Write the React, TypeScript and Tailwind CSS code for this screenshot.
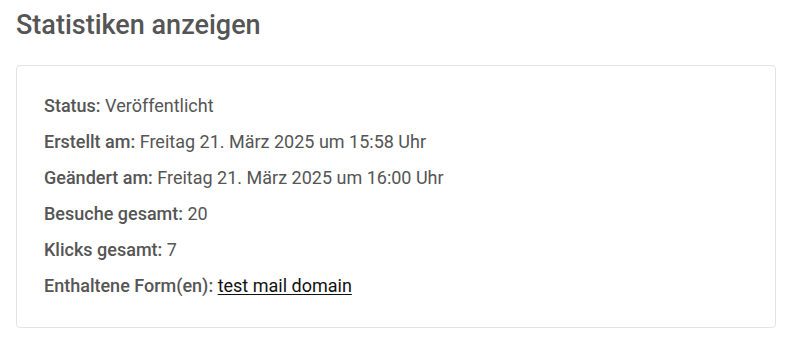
export default function App() {
  const rows: [string, React.ReactNode][] = [
    ["Status:", "Veröffentlicht"],
    ["Erstellt am:", "Freitag 21. März 2025 um 15:58 Uhr"],
    ["Geändert am:", "Freitag 21. März 2025 um 16:00 Uhr"],
    ["Besuche gesamt:", "20"],
    ["Klicks gesamt:", "7"],
    [
      "Enthaltene Form(en):",
      <a href="#" className="text-[#111] underline underline-offset-2">test mail domain</a>,
    ],
  ];
  return (
    <div className="bg-white min-h-[338px] px-4 pt-[9px] text-[#555]" style={{ fontFamily: "Roboto, 'Liberation Sans', sans-serif" }}>
      <h1 className="text-[27px] leading-[32px] font-medium text-[#555] mb-[24px]">Statistiken anzeigen</h1>
      <div className="w-[760px] border border-[#e3e3e3] rounded-[4px] pl-[27px] pt-[22px] pb-[23px]">
        {rows.map(([label, value], i) => (
          <div key={i} className="text-[18px] leading-[36px]">
            <span className="font-medium">{label}</span> {value}
          </div>
        ))}
      </div>
    </div>
  );
}
